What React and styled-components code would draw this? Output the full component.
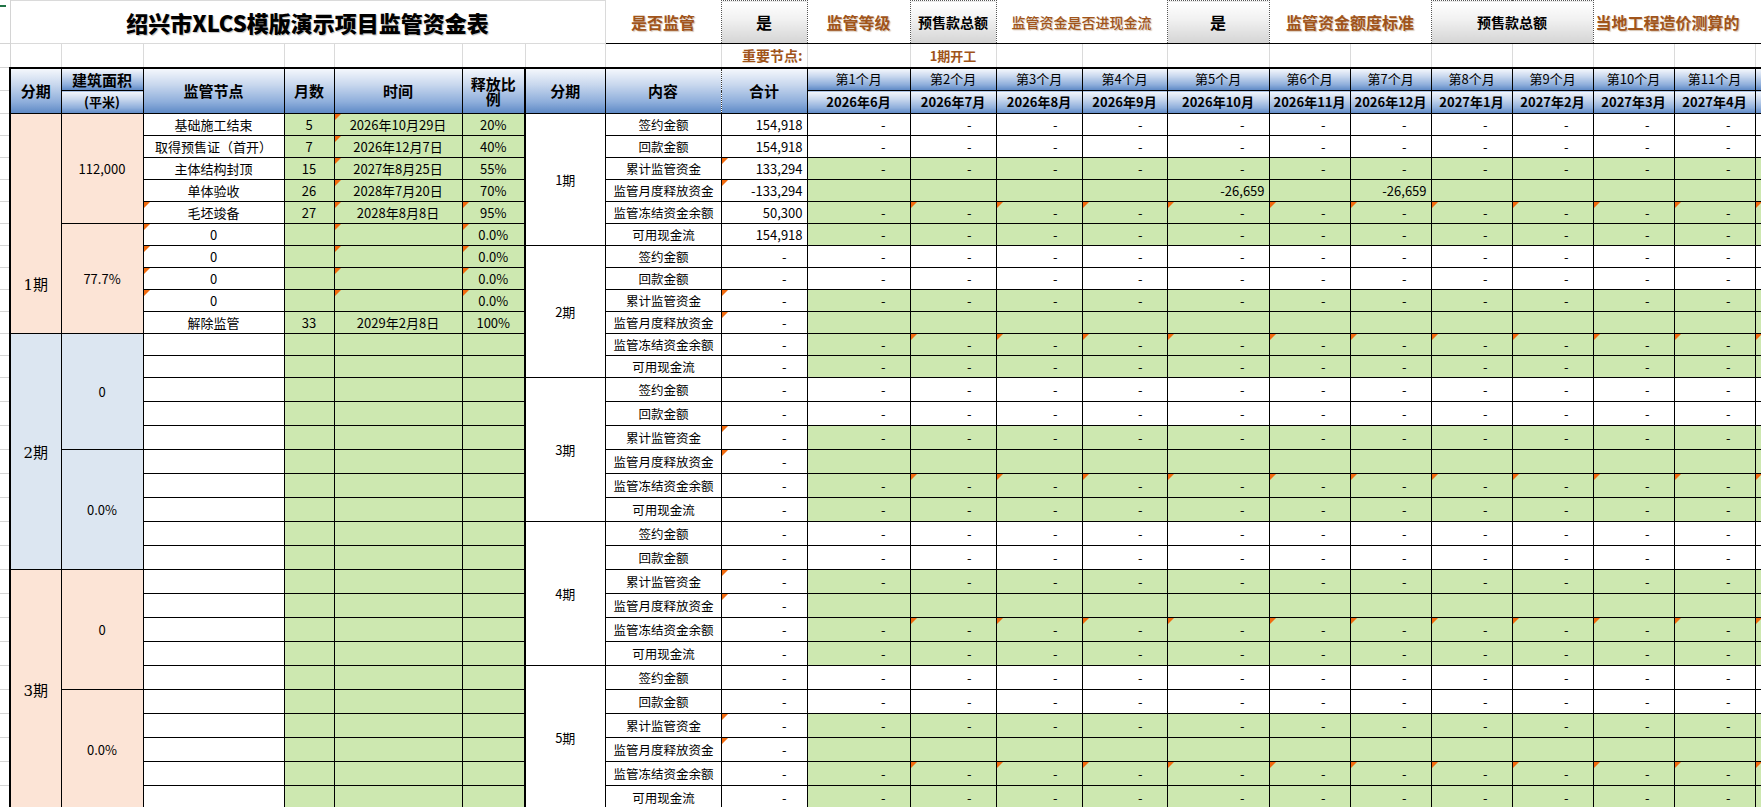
import React from "react";
import styled, { createGlobalStyle, css } from "styled-components";

const Global = createGlobalStyle`
  html, body { margin: 0; padding: 0; background: #fff; overflow: hidden; }
  body { font-family: "Noto Sans CJK SC", "Noto Sans", sans-serif; }
`;

const Sheet = styled.div`
  width: 1761px;
  height: 807px;
  overflow: hidden;
`;

const Table = styled.table`
  border-collapse: collapse;
  table-layout: fixed;
  width: 1800px;
  font-family: "Noto Sans CJK SC", "Noto Sans", sans-serif;
  font-size: 13px;
  color: #000;
`;

const Row = styled.tr`
  height: ${(p) => p.$h}px;
`;

const Gutter = styled.td`
  padding: 0;
  border-bottom: 1px solid #d4d4d4;
  border-right: 1px solid #d4d4d4;
  position: relative;
  ${(p) =>
    p.$mark &&
    css`
      &::after {
        content: "";
        position: absolute;
        left: 0;
        top: 4px;
        width: 6px;
        height: 2px;
        background: #217346;
      }
    `}
`;

const Title = styled.td`
  border: 1px solid #dadada;
  text-align: center;
  font-size: 22px;
  font-weight: 800;
  text-shadow: 1px 1px 1px rgba(0, 0, 0, 0.25);
`;

const Label = styled.td`
  border-bottom: 1px solid #000;
  text-align: ${(p) => p.$align || "center"};
  color: #a0541a;
  font-weight: ${(p) => p.$weight || 700};
  font-size: ${(p) => p.$size || 16}px;
  white-space: nowrap;
  overflow: hidden;
  padding: 0 2px;
  text-shadow: 1px 1px 1px rgba(120, 60, 0, 0.3);
`;

const GrayBox = styled.td`
  border-bottom: 1px solid #000;
  border-left: 1px dotted #555;
  border-right: 1px dotted #555;
  border-top: 1px dotted #555;
  background: linear-gradient(#ffffff, #f2f2f2 40%, #d4d4d4);
  text-align: center;
  font-size: ${(p) => p.$size || 16}px;
  font-weight: 700;
  white-space: nowrap;
  overflow: hidden;
`;

const Note = styled.td`
  border-right: 1px solid #dadada;
  border-bottom: 2px solid #000;
  color: #a0541a;
  font-weight: 700;
  font-size: ${(p) => p.$size || 14}px;
  text-align: ${(p) => p.$align || "center"};
  padding: 0 4px;
  white-space: nowrap;
`;

const Head = styled.th`
  border: 1px solid #000;
  border-top: 2px solid #000;
  ${(p) => p.$thickLeft && "border-left: 2px solid #000;"}
  ${(p) => p.$dotted && "border-left: 1px dotted #333; border-right: 1px dotted #333;"}
  background: linear-gradient(#f4f7fc, #c9d8ee 35%, #8eaedb 75%, #5f8ac6);
  font-size: ${(p) => p.$size || 15}px;
  font-weight: ${(p) => (p.$light ? 400 : 700)};
  line-height: ${(p) => (p.$tight ? 1.0 : 1.15)};
  padding: 0;
  text-align: center;
  white-space: nowrap;
  overflow: hidden;
`;

const SubHead = styled(Head)`
  border-top: 1px solid #000;
`;

const fills = {
  white: "#ffffff",
  green: "#cde8b0",
  peach: "#fce4d6",
  blue: "#dce6f1",
};

const Cell = styled.td`
  border: 1px solid #000;
  ${(p) => p.$thickLeft && "border-left: 2px solid #000;"}
  background: ${(p) => fills[p.$fill || "white"]};
  text-align: ${(p) => p.$align || "center"};
  padding: 0 ${(p) => (p.$pr !== undefined ? p.$pr : 3)}px 0 3px;
  font-size: ${(p) => p.$size || 13}px;
  white-space: nowrap;
  overflow: hidden;
  position: relative;
  ${(p) => p.$padTop && `padding-top: ${p.$padTop}px;`}
  ${(p) =>
    p.$mark &&
    css`
      &::before {
        content: "";
        position: absolute;
        left: 0;
        top: 0;
        border-top: 6px solid #f26b0f;
        border-right: 6px solid transparent;
      }
    `}
`;

const Period = styled(Cell)`
  font-family: "DejaVu Serif", "Noto Sans CJK SC", serif;
  font-size: 15px;
  border-left: 2px solid #000;
`;

const colWidths = [10, 51, 82, 141, 50, 128, 63, 80, 116, 86, 103, 86, 86, 85, 102, 81, 81, 81, 81, 81, 81, 45];

const months = [
  ["第1个月", "2026年6月"],
  ["第2个月", "2026年7月"],
  ["第3个月", "2026年8月"],
  ["第4个月", "2026年9月"],
  ["第5个月", "2026年10月"],
  ["第6个月", "2026年11月"],
  ["第7个月", "2026年12月"],
  ["第8个月", "2027年1月"],
  ["第9个月", "2027年2月"],
  ["第10个月", "2027年3月"],
  ["第11个月", "2027年4月"],
  ["", ""],
];

const nodes = [
  ["基础施工结束", "5", "2026年10月29日", "20%"],
  ["取得预售证（首开）", "7", "2026年12月7日", "40%"],
  ["主体结构封顶", "15", "2027年8月25日", "55%"],
  ["单体验收", "26", "2028年7月20日", "70%"],
  ["毛坯竣备", "27", "2028年8月8日", "95%"],
  ["0", "", "", "0.0%"],
  ["0", "", "", "0.0%"],
  ["0", "", "", "0.0%"],
  ["0", "", "", "0.0%"],
  ["解除监管", "33", "2029年2月8日", "100%"],
];

const kinds = ["签约金额", "回款金额", "累计监管资金", "监管月度释放资金", "监管冻结资金余额", "可用现金流"];
const totals1 = ["154,918", "154,918", "133,294", "-133,294", "50,300", "154,918"];

const leftBlocks = [
  { name: "1期", fill: "peach", area: ["112,000", "77.7%"], padTop: 120 },
  { name: "2期", fill: "blue", area: ["0", "0.0%"] },
  { name: "3期", fill: "peach", area: ["0", "0.0%"] },
];

function LeftCells({ r }) {
  const block = Math.floor(r / 10);
  const inBlock = r % 10;
  const b = leftBlocks[block];
  const n = block === 0 ? nodes[inBlock] : ["", "", "", ""];
  const cells = [];
  if (inBlock === 0)
    cells.push(
      <Period key="p" rowSpan={10} $fill={b.fill} $padTop={b.padTop}>
        {b.name}
      </Period>
    );
  if (inBlock === 0 || inBlock === 5)
    cells.push(
      <Cell key="a" rowSpan={5} $fill={b.fill}>
        {inBlock === 0 ? b.area[0] : b.area[1]}
      </Cell>
    );
  const first = block === 0;
  cells.push(
    <Cell key="n" $mark={first && inBlock >= 4 && inBlock <= 8}>
      {n[0]}
    </Cell>,
    <Cell key="m" $fill="green">{n[1]}</Cell>,
    <Cell key="t" $fill="green" $mark={first && inBlock <= 8}>
      {n[2]}
    </Cell>,
    <Cell key="r" $fill="green" $mark={first && inBlock >= 4 && inBlock <= 8}>
      {n[3]}
    </Cell>
  );
  return cells;
}

function RightCells({ r }) {
  const period = Math.floor(r / 6);
  const k = r % 6;
  const cells = [];
  if (k === 0)
    cells.push(
      <Cell key="p" rowSpan={6} $thickLeft>
        {period + 1}期
      </Cell>
    );
  cells.push(
    <Cell key="k" $size={12.5} $pr={2}>
      {kinds[k]}
    </Cell>,
    <Cell key="t" $align="right" $pr={period === 0 ? 4 : 20} $mark={k === 2 || k === 3}>
      {period === 0 ? totals1[k] : "-"}
    </Cell>
  );
  months.forEach((_, i) => {
    const green = k >= 2;
    let v = "-";
    if (k === 3) v = period === 0 && (i === 4 || i === 6) ? "-26,659" : "";
    const pr = v === "-26,659" ? 4 : 24;
    cells.push(
      <Cell key={"m" + i} $fill={green ? "green" : "white"} $align="right" $pr={pr} $mark={k === 4 && i >= 1}>
        {v}
      </Cell>
    );
  });
  return cells;
}

export default function App() {
  const rowH = (r) => (r < 12 ? 22 : 24);
  return (
    <Sheet>
      <Global />
      <Table>
        <colgroup>
          {colWidths.map((w, i) => (
            <col key={i} style={{ width: w }} />
          ))}
        </colgroup>
        <tbody>
          <Row $h={43}>
            <Gutter $mark />
            <Title colSpan={7}>绍兴市XLCS模版演示项目监管资金表</Title>
            <Label>是否监管</Label>
            <GrayBox>是</GrayBox>
            <Label>监管等级</Label>
            <GrayBox $size={14}>预售款总额</GrayBox>
            <Label colSpan={2} $size={14} $weight={500}>监管资金是否进现金流</Label>
            <GrayBox>是</GrayBox>
            <Label colSpan={2}>监管资金额度标准</Label>
            <GrayBox colSpan={2} $size={14}>预售款总额</GrayBox>
            <Label colSpan={3} $align="left">当地工程造价测算的</Label>
          </Row>
          <Row $h={24}>
            <Gutter />
            {[1, 2, 3, 4, 5, 6, 7, 8].map((i) => (
              <Note key={i} />
            ))}
            <Note $align="right">重要节点:</Note>
            <Note />
            <Note $size={13}>1期开工</Note>
            {[12, 13, 14, 15, 16, 17, 18, 19, 20, 21].map((i) => (
              <Note key={i} />
            ))}
          </Row>
          <Row $h={23}>
            <Gutter />
            <Head rowSpan={2} $thickLeft>分期</Head>
            <Head>建筑面积</Head>
            <Head rowSpan={2}>监管节点</Head>
            <Head rowSpan={2}>月数</Head>
            <Head rowSpan={2}>时间</Head>
            <Head rowSpan={2} $tight>
              释放比
              <br />例
            </Head>
            <Head rowSpan={2} $thickLeft>分期</Head>
            <Head rowSpan={2} $dotted>内容</Head>
            <Head rowSpan={2} $dotted>合计</Head>
            {months.map((m, i) => (
              <Head key={"h" + i} $size={13} $light>
                {m[0]}
              </Head>
            ))}
          </Row>
          <Row $h={23}>
            <Gutter />
            <SubHead $size={13}>(平米)</SubHead>
            {months.map((m, i) => (
              <SubHead key={"s" + i} $size={13}>
                {m[1]}
              </SubHead>
            ))}
          </Row>
          {Array.from({ length: 30 }, (_, r) => (
            <Row key={r} $h={rowH(r)}>
              <Gutter />
              <LeftCells r={r} />
              <RightCells r={r} />
            </Row>
          ))}
        </tbody>
      </Table>
    </Sheet>
  );
}
